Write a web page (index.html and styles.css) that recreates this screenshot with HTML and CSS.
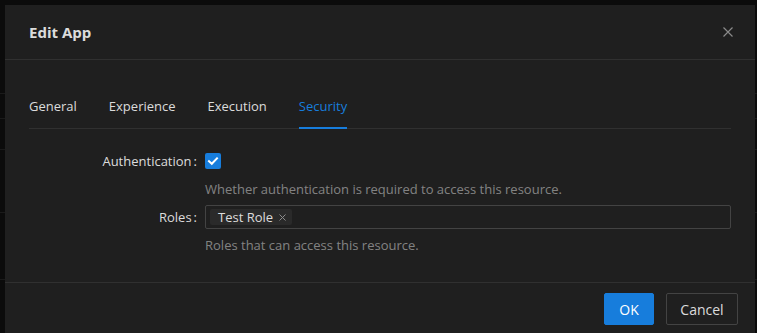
FILE: index.html
```html
<!DOCTYPE html>
<html>
<head>
<meta charset="utf-8">
<link rel="stylesheet" href="styles.css">
</head>
<body>
<div class="page">
  <div class="bg-row r1"></div>
  <div class="bg-row r2"></div>
  <div class="bg-row r3"></div>
  <div class="bg-row r4"></div>
  <div class="bg-row r5"></div>
</div>
<div class="mask"></div>
<div class="modal">
  <div class="modal-header">
    <div class="modal-title">Edit App</div>
    <button class="modal-close" aria-label="Close">
      <svg width="10" height="10" viewBox="0 0 10 10"><path d="M0.5 0.5L9.5 9.5M9.5 0.5L0.5 9.5" stroke="#8a8a8a" stroke-width="1.2" fill="none"/></svg>
    </button>
  </div>
  <div class="modal-body">
    <div class="tabs">
      <div class="tab">General</div>
      <div class="tab">Experience</div>
      <div class="tab">Execution</div>
      <div class="tab active">Security</div>
    </div>
    <div class="form">
      <div class="form-item">
        <div class="label">Authentication<span class="colon">:</span></div>
        <div class="control">
          <div class="control-row">
            <span class="checkbox">
              <svg width="16" height="16" viewBox="0 0 16 16"><path d="M4 8.2L6.8 10.8L12 5.4" stroke="#fff" stroke-width="2" fill="none" stroke-linecap="square"/></svg>
            </span>
          </div>
          <div class="help">Whether authentication is required to access this resource.</div>
        </div>
      </div>
      <div class="form-item">
        <div class="label">Roles<span class="colon">:</span></div>
        <div class="control">
          <div class="control-row">
            <div class="select">
              <span class="tag">Test Role<svg class="tag-x" width="7" height="7" viewBox="0 0 7 7"><path d="M0.5 0.5L6.5 6.5M6.5 0.5L0.5 6.5" stroke="#8c8c8c" stroke-width="1" fill="none"/></svg></span>
            </div>
          </div>
          <div class="help">Roles that can access this resource.</div>
        </div>
      </div>
    </div>
  </div>
  <div class="modal-footer">
    <button class="btn primary">OK</button>
    <button class="btn cancel">Cancel</button>
  </div>
</div>
</body>
</html>
```
FILE: styles.css
```css
* { box-sizing: border-box; }
html, body { margin: 0; padding: 0; }
body {
  background: #141414;
  font-family: "Open Sans", "Noto Sans", sans-serif;
  font-size: 13px;
  color: rgba(255,255,255,0.85);
  width: 757px;
  height: 333px;
  overflow: hidden;
  position: relative;
}
.bg-row { border-bottom: 1px solid #303030; }
.r1 { height: 94px; }
.r2 { height: 25px; }
.r3 { height: 31px; }
.r4 { height: 63px; }
.r5 { height: 67px; }
.mask {
  position: absolute;
  inset: 0;
  background: rgba(0,0,0,0.45);
}
.modal {
  position: absolute;
  left: 5px;
  top: 5px;
  width: 750px;
  height: 328px;
  background: #1f1f1f;
  display: flex;
  flex-direction: column;
}
.modal-header {
  height: 55px;
  padding: 0 24px;
  border-bottom: 1px solid #303030;
  display: flex;
  align-items: center;
  justify-content: space-between;
}
.modal-title {
  font-size: 15px;
  font-weight: 700;
  color: rgba(255,255,255,0.85);
}
.modal-close {
  background: none;
  border: 0;
  padding: 0;
  margin-right: -2px;
  display: flex;
  width: 10px;
  height: 10px;
}
.modal-body {
  padding: 24px 24px 0 24px;
  height: 222px;
}
.tabs {
  display: flex;
  gap: 32px;
  border-bottom: 1px solid #303030;
}
.tab {
  padding: 11px 0 10px;
  line-height: 22px;
  border-bottom: 2px solid transparent;
  margin-bottom: -1px;
}
.tab.active {
  color: #177ddc;
  border-bottom-color: #177ddc;
}
.form { padding-top: 16px; }
.form-item { display: flex; }
.label {
  width: 176px;
  flex: none;
  height: 32px;
  display: flex;
  align-items: center;
  justify-content: flex-end;
  padding-right: 8px;
}
.colon { margin-left: 2px; }
.control { flex: 1; }
.control-row {
  height: 32px;
  display: flex;
  align-items: center;
}
.checkbox {
  width: 16px;
  height: 16px;
  background: #177ddc;
  border-radius: 2px;
  display: flex;
}
.help {
  color: rgba(255,255,255,0.45);
  line-height: 24px;
  min-height: 24px;
}
.select {
  width: 100%;
  height: 24px;
  border: 1px solid #434343;
  border-radius: 2px;
  display: flex;
  align-items: center;
  padding: 0 4px;
}
.tag {
  height: 16px;
  line-height: 16px;
  background: #2a2a2a;
  border-radius: 2px;
  padding: 0 6px 0 8px;
  display: flex;
  align-items: center;
  gap: 6px;
}
.tag-x { flex: none; }
.modal-footer {
  border-top: 1px solid #303030;
  padding: 10px 17px 0 16px;
  display: flex;
  justify-content: flex-end;
  gap: 12px;
}
.btn {
  height: 32px;
  padding: 0;
  font-family: inherit;
  font-size: 14px;
  color: rgba(255,255,255,0.85);
  background: transparent;
  border: 1px solid #434343;
  border-radius: 2px;
}
.btn.primary {
  background: #177ddc;
  border-color: #177ddc;
  color: #fff;
  width: 50px;
}
.btn.cancel { width: 72px; }
```
